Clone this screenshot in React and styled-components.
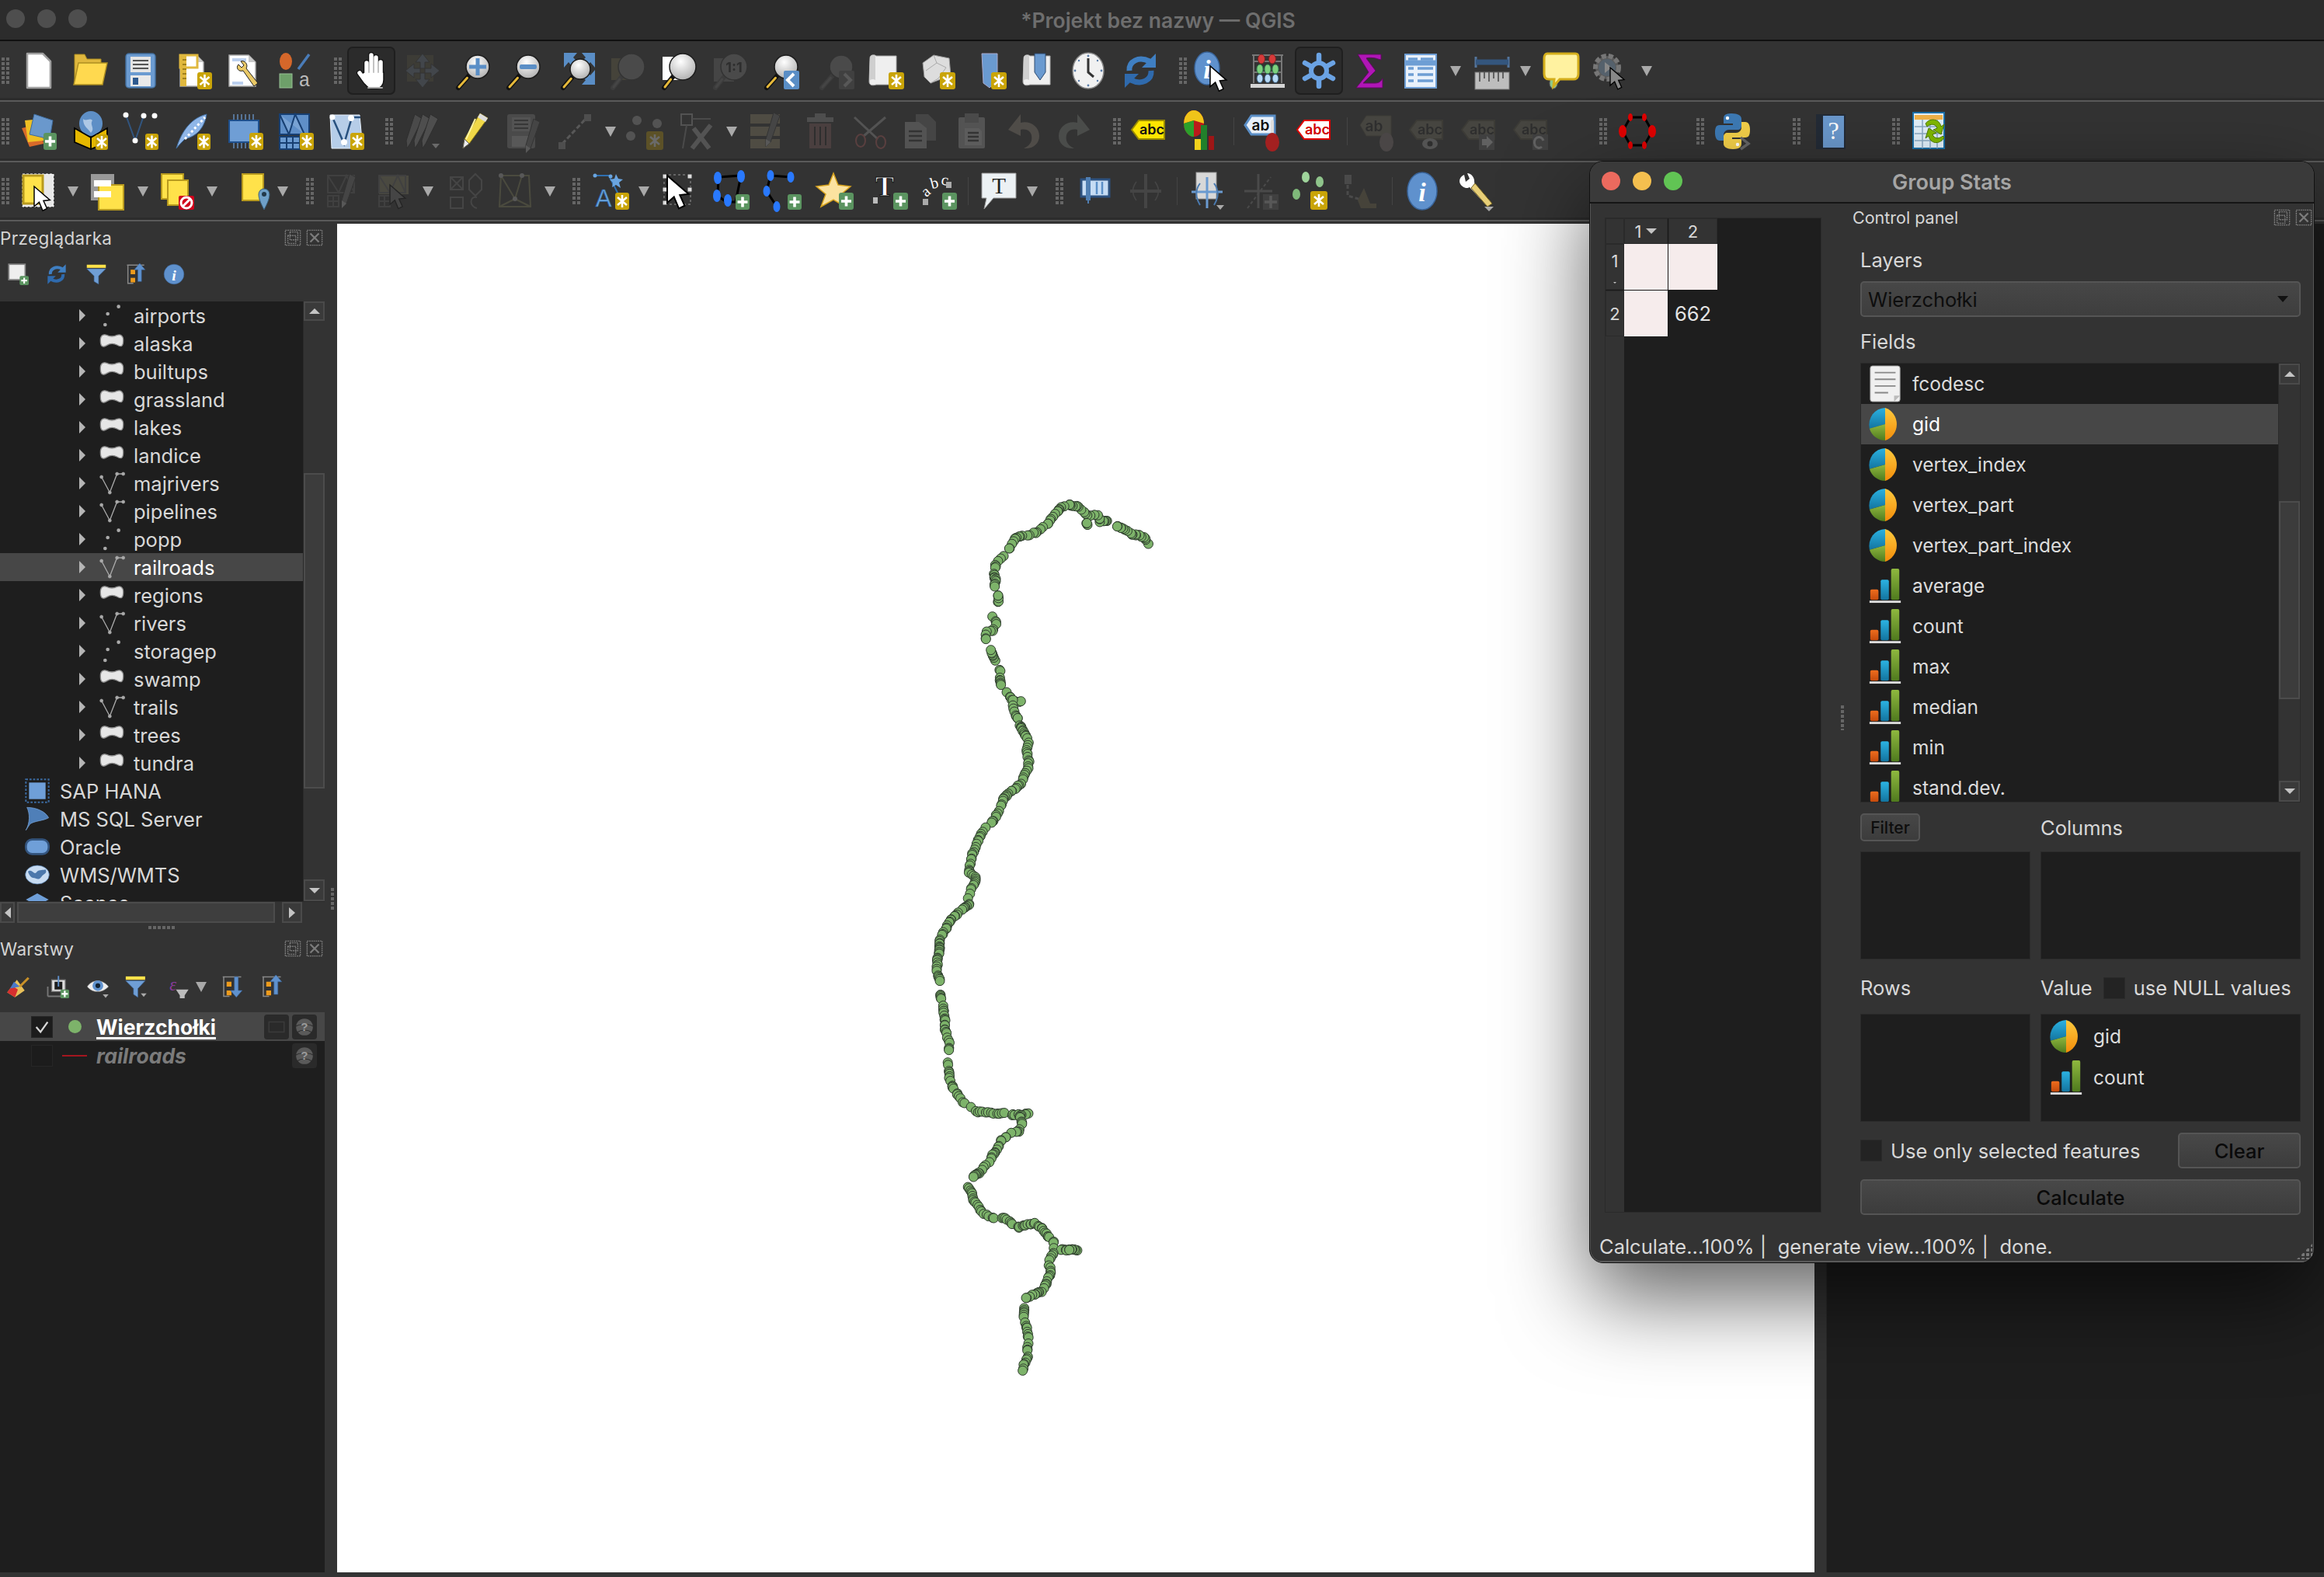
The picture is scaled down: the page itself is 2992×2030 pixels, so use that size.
import React from 'react';
import styled, { createGlobalStyle } from 'styled-components';

const Global = createGlobalStyle`
  html, body { margin: 0; padding: 0; background: #333; }
  body { font-family: Inter, "Noto Sans", "Liberation Sans", sans-serif; overflow: hidden; }
  * { box-sizing: border-box; }
`;

/* ---------- page frame ---------- */
const Root = styled.div`
  position: relative; width: 2992px; height: 2030px; background: #333;
  display: flex; flex-direction: column; overflow: hidden; color: #d8d8d8;
`;
const TitleBar = styled.div`
  height: 53px; flex: none; background: #2c2c2c; border-bottom: 2px solid #111;
  display: flex; align-items: center; justify-content: center; position: relative;
`;
const TitleLights = styled.div`
  position: absolute; left: 8px; top: 12px; display: flex; gap: 16px;
`;
const GreyLight = styled.span`
  width: 24px; height: 24px; border-radius: 50%; background: #4e4e4e;
`;
const TitleText = styled.span`
  font-size: 26.5px; font-weight: 600; color: #6e6e6e; margin-right: 10px;
`;
const ToolRow = styled.div`
  height: ${p => p.$h}px; flex: none; background: #333; display: flex; align-items: center;
  border-bottom: 2px solid #5a5a5a; box-shadow: inset 0 -3px 0 #2c2c2c;
`;
const Tool = styled.div`
  flex: none; width: ${p => (p.$active ? 62 : 48)}px; height: ${p => (p.$active ? 62 : 48)}px;
  display: flex; align-items: center; justify-content: center;
  opacity: ${p => (p.$off ? 0.27 : 1)};
  ${p => p.$active && 'background:#2b2b2b; border:2px solid #1f1f1f; border-radius:7px;'}
`;
const Grip = styled.i`
  flex: none; width: 10px; height: 34px; display: block;
  background-image: linear-gradient(#666 4px, transparent 4px);
  background-size: 100% 6px;
  mask-image: linear-gradient(to right, #000 4px, transparent 4px);
  mask-size: 6px 100%;
`;
const DropArrow = styled.i`
  flex: none; width: 0; height: 0; display: block; margin: 0 7px;
  border-left: 7px solid transparent; border-right: 7px solid transparent; border-top: 13px solid #a9a9a9;
`;
const Sep = styled.i`
  flex: none; width: 1px; height: 36px; background: #444; display: block;
`;
const Main = styled.div`
  flex: 1; display: flex; min-height: 0; padding-bottom: 6px;
`;
const LeftDock = styled.div`
  width: 434px; flex: none; display: flex; flex-direction: column; padding-right: 16px; position: relative;
`;
const Canvas = styled.div`
  width: 1902px; flex: none; background: #fff; margin-top: 3px; position: relative;
`;
const MapSvg = styled.svg`
  position: absolute; inset: 0; width: 100%; height: 100%;
`;
const RightDock = styled.div`
  flex: 1; margin: 3px 0 0 15px; background: #1e1e1e; border-left: 1px solid #2a2a2a;
`;

/* ---------- docks ---------- */
const DockHead = styled.div`
  height: 36px; flex: none; margin-top: 3px; display: flex; align-items: center; justify-content: space-between;
  font-size: 22.5px; letter-spacing: .35px; color: #d4d4d4; padding-right: 2px;
`;
const FloatBtns = styled.div`
  display: flex; gap: 6px;
`;
const DockBar = styled.div`
  height: ${p => p.$h}px; flex: none; display: flex; align-items: center; position: relative;
  padding-bottom: ${p => p.$pb}px;
`;
const DockBtn = styled.div`
  position: relative; flex: none; width: 28px; height: 30px; display: flex; align-items: center; justify-content: center;
  margin-left: ${p => p.$ml}px;
`;
const TreeBox = styled.div`
  height: 772px; flex: none; display: grid; grid-template-columns: 390px 28px; background: #1e1e1e;
`;
const TreeList = styled.div`
  overflow: hidden;
`;
const TreeRow = styled.div`
  height: 36px; display: flex; align-items: center; font-size: 25.5px;
  padding-left: ${p => (p.$top ? 32 : 102)}px;
  background: ${p => (p.$sel ? '#474747' : 'transparent')};
  color: ${p => (p.$sel ? '#fff' : '#d8d8d8')};
`;
const Expander = styled.i`
  width: 0; height: 0; margin-right: 18px; display: block; flex: none;
  border-top: 8px solid transparent; border-bottom: 8px solid transparent; border-left: 8px solid #b5b5b5;
`;
const RowIcon = styled.span`
  width: 32px; height: 32px; flex: none; margin-right: ${p => p.$mr}px; display: flex;
`;
const VScroll = styled.div`
  background: #333; display: flex; flex-direction: column; border-left: 1px solid #2a2a2a;
`;
const ScrollBtn = styled.div`
  height: ${p => p.$h}px; flex: none; background: #3a3a3a; border: 2px solid #4a4a4a;
  display: flex; align-items: center; justify-content: center;
`;
const TriUp = styled.i`
  width: 0; height: 0; display: block; border-left: 7px solid transparent; border-right: 7px solid transparent;
  border-bottom: 7px solid #c4c4c4;
`;
const TriDown = styled(TriUp)`
  border-bottom: 0; border-top: 7px solid #c4c4c4;
`;
const TinyDown = styled(TriUp)`
  border-left-width: 2px; border-right-width: 2px; border-bottom: 0; border-top: 2px solid #c4c4c4; margin-top: 8px;
`;
const TriLeft = styled.i`
  width: 0; height: 0; display: block; border-top: 7px solid transparent; border-bottom: 7px solid transparent;
  border-right: 8px solid #c4c4c4;
`;
const TriRight = styled(TriLeft)`
  border-right: 0; border-left: 8px solid #c4c4c4;
`;
const ScrollGap = styled.div`
  height: ${p => p.$h}px; flex: ${p => (p.$h ? 'none' : 1)};
`;
const ScrollThumb = styled.div`
  height: ${p => p.$h}px; flex: none; background: #3c3c3c; border: 2px solid #4c4c4c;
`;
const HScroll = styled.div`
  height: 28px; flex: none; display: flex; align-items: stretch; border-top: 1px solid #2a2a2a; width: 418px;
`;
const HBtn = styled.div`
  width: ${p => p.$w}px; margin-left: ${p => p.$ml}px; flex: none; background: #3a3a3a; border: 2px solid #4a4a4a;
  display: flex; align-items: center; justify-content: center;
`;
const HThumb = styled.div`
  width: 332px; margin-left: 3px; flex: none; background: #3e3e3e; border: 2px solid #4c4c4c;
`;
const HSplit = styled.div`
  height: 12px; flex: none; display: flex; align-items: center; justify-content: center;
`;
const HDots = styled.i`
  width: 36px; height: 4px; display: block;
  background-image: linear-gradient(to right, #666 4px, transparent 4px); background-size: 6px 100%;
`;
const VDots = styled.i`
  position: absolute; width: 4px; height: ${p => p.$h}px; left: ${p => p.$l}px; top: ${p => p.$t}px; display: block;
  background-image: linear-gradient(#666 4px, transparent 4px); background-size: 100% 6px;
`;
const LayerBox = styled.div`
  flex: 1; background: #1e1e1e;
`;
const LayerRow = styled.div`
  height: 37px; display: flex; align-items: center; padding-left: 40px; position: relative;
  background: ${p => (p.$sel ? '#474747' : 'transparent')};
`;
const LayerCheck = styled.span`
  width: 28px; height: 28px; background: #1c1c1c; border: 1px solid #262626; flex: none;
  display: flex; align-items: center; justify-content: center;
`;
const LayerSym = styled.span`
  width: 32px; flex: none; margin: 0 12px; display: flex; justify-content: center; align-items: center;
`;
const LayerDot = styled.i`
  width: 17px; height: 17px; border-radius: 50%; background: #7db36a; display: block;
`;
const LayerLine = styled.i`
  width: 32px; height: 2px; background: #a4161f; display: block;
`;
const LayerName = styled.span`
  font-size: 26.5px; font-weight: 700;
  ${p => (p.$italic
    ? 'font-style: italic; color: #7b7b7b;'
    : 'color: #fff; text-decoration: underline; text-decoration-thickness: 2.5px; text-underline-offset: 3px;')}
`;
const LayerTail = styled.span`
  position: absolute; right: 10px; top: 3px; display: flex; gap: 4px;
`;
const LayerBadge = styled.span`
  width: 32px; height: 32px; background: #2a2a2a; border-radius: 4px;
  display: flex; align-items: center; justify-content: center;
`;

/* ---------- floating dialog ---------- */
const Dialog = styled.div`
  position: absolute; left: 2046px; top: 207px; width: 934px; height: 1419px; background: #333;
  border-radius: 18px; border: 1px solid #111; box-shadow: inset 0 0 0 1px #555, 0 44px 110px rgba(0,0,0,.62);
  display: flex; flex-direction: column; overflow: hidden;
`;
const DialogBar = styled.div`
  height: 54px; flex: none; background: #3a3a3a; border-bottom: 2px solid #151515;
  display: flex; align-items: center; justify-content: center; position: relative;
`;
const DialogLights = styled.div`
  position: absolute; left: 15px; top: 13px; display: flex; gap: 16px;
`;
const Light = styled.span`
  width: 24px; height: 24px; border-radius: 50%; background: ${p => p.$c};
`;
const DialogTitle = styled.span`
  font-size: 27px; font-weight: 600; color: #a5a5a5;
`;
const DialogBody = styled.div`
  flex: 1; display: flex; padding: 3px 18px 0 19px; min-height: 0; position: relative;
`;
const TableWidget = styled.div`
  width: 279px; height: 1281px; margin-top: 15px; flex: none; background: #1e1e1e; border: 1px solid #2b2b2b;
  display: grid; grid-template-columns: 24px 56px 1px 63px; grid-template-rows: 33px 59px 1px 59px;
  align-content: start; position: relative;
`;
const TableSide = styled.i`
  position: absolute; left: 0; top: 33px; bottom: 0; width: 24px; background: #333; display: block;
`;
const TH = styled.div`
  background: #333; border: 1px solid #2a2a2a; display: flex; align-items: center; justify-content: center;
  flex-direction: ${p => (p.$col ? 'column' : 'row')};
  font-size: 22px; color: #d8d8d8; gap: 6px; position: relative; z-index: 1;
`;
const TD = styled.div`
  background: ${p => (p.$pink ? '#f6ecec' : '#1e1e1e')}; color: #e4e4e4; font-size: 25.5px;
  display: flex; align-items: center; justify-content: center; position: relative; z-index: 1;
`;
const TLine = styled.i`
  background: #1a1a1a; display: block; position: relative; z-index: 1;
`;
const Control = styled.div`
  width: 567px; margin-left: 50px; flex: none; display: flex; flex-direction: column;
`;
const ControlHead = styled.div`
  height: 30px; margin-left: -10px; margin-right: -15px; flex: none; display: flex; align-items: center;
  justify-content: space-between; font-size: 21.5px; color: #d6d6d6;
`;
const Label = styled.div`
  height: 30px; flex: none; margin-top: ${p => p.$mt}px; font-size: 25.5px; color: #d8d8d8;
  display: flex; align-items: center; white-space: nowrap;
`;
const Combo = styled.div`
  height: 46px; flex: none; margin-top: 13px; border: 2px solid #555; border-radius: 5px;
  background: linear-gradient(#474747, #3e3e3e); color: #0d0d0d; font-size: 25.5px;
  display: flex; align-items: center; justify-content: space-between; padding: 0 14px 0 8px;
`;
const ComboCaret = styled.i`
  width: 0; height: 0; display: block; border-left: 7px solid transparent; border-right: 7px solid transparent;
  border-top: 8px solid #111;
`;
const FieldList = styled.div`
  height: 566px; flex: none; margin-top: 13px; background: #1e1e1e; border: 1px solid #2a2a2a;
  display: grid; grid-template-columns: 1fr 28px; overflow: hidden;
`;
const FieldCol = styled.div`
  overflow: hidden; min-width: 0;
`;
const FieldRow = styled.div`
  height: 52px; display: flex; align-items: center; gap: 12px; padding-left: 8px; font-size: 24.5px;
  background: ${p => (p.$sel ? '#474747' : 'transparent')};
  color: ${p => (p.$sel ? '#fff' : '#dcdcdc')};
`;
const FilterLine = styled.div`
  display: grid; grid-template-columns: 219px 335px; column-gap: 13px; margin-top: ${p => p.$mt}px; flex: none;
  align-items: ${p => (p.$center ? 'center' : 'stretch')};
`;
const SmallBtn = styled.div`
  width: 77px; height: 36px; border: 2px solid #555; border-radius: 5px; background: linear-gradient(#474747, #3c3c3c);
  color: #0d0d0d; font-size: 21px; font-weight: 500; display: flex; align-items: center; justify-content: center;
`;
const WellBox = styled.div`
  height: 139px; background: #1e1e1e; border: 1px solid #2a2a2a; padding-top: 1px;
`;
const WellRow = styled.div`
  height: 53px; display: flex; align-items: center; gap: 12px; padding-left: 9px; font-size: 24.5px; color: #dcdcdc;
`;
const ValueHead = styled.div`
  display: flex; align-items: center; font-size: 25.5px; color: #d8d8d8; white-space: nowrap;
`;
const Check = styled.span`
  width: 28px; height: 28px; background: #232323; border: 1px solid #2a2a2a; display: block; flex: none;
  margin: 0 ${p => p.$mr}px 0 ${p => p.$ml}px;
`;
const OnlyRow = styled.div`
  display: flex; align-items: center; justify-content: space-between; height: 46px; flex: none; margin-top: 14px;
`;
const OnlyLabel = styled.span`
  display: flex; align-items: center; font-size: 25.5px; color: #d8d8d8; white-space: nowrap;
`;
const PushBtn = styled.div`
  height: 46px; flex: none; width: ${p => p.$w || '100%'}; margin-top: ${p => p.$mt || 0}px;
  border: 2px solid #555; border-radius: 5px; background: linear-gradient(#484848, #3c3c3c); color: #0a0a0a;
  font-size: 25.5px; font-weight: 500; display: flex; align-items: center; justify-content: center;
`;
const StatusLine = styled.div`
  height: 63px; flex: none; display: flex; align-items: center; padding: 23px 0 0 12px; font-size: 25.5px;
  color: #d8d8d8; white-space: pre; position: relative; border-bottom: 2px solid #5a5a5a;
`;
const Resizer = styled.i`
  position: absolute; right: 2px; bottom: 2px; width: 20px; height: 20px; display: block;
  background: radial-gradient(circle at 2px 2px, #777 2px, transparent 2.5px) 0 0 / 6px 6px;
  clip-path: polygon(100% 0, 100% 100%, 0 100%);
`;
const DefsSvg = styled.svg`
  position: absolute; width: 0; height: 0;
`;

/* ---------- icon pieces ---------- */
const Ast = ({ x = 30, y = 24, w = 17, h = 24 }) => {
  const cx = x + w / 2, cy = y + h / 2;
  return (
    <g>
      <rect x={x} y={y} width={w} height={h} rx="3" fill="#c9a408" />
      <path d={`M${cx} ${cy - 8}V${cy + 8}M${cx - 6} ${cy - 5}L${cx + 6} ${cy + 5}M${cx + 6} ${cy - 5}L${cx - 6} ${cy + 5}`} stroke="#fff" strokeWidth="2.6" />
    </g>
  );
};
const Add = ({ x = 31, y = 28, w = 17, h = 20 }) => {
  const cx = x + w / 2, cy = y + h / 2;
  return (
    <g>
      <rect x={x} y={y} width={w} height={h} rx="3" fill="#5b9460" />
      <path d={`M${cx} ${cy - 6.5}V${cy + 6.5}M${cx - 6.5} ${cy}H${cx + 6.5}`} stroke="#fff" strokeWidth="3.6" />
    </g>
  );
};
const Arrow = ({ x, y, s = 1, fill = '#fff' }) => (
  <path transform={`translate(${x} ${y}) scale(${s})`} d="M0 0V28L7 22L12 34L18 31L13 20L22 19Z" fill={fill} stroke="#000" strokeWidth="1.6" />
);
const Lens = ({ fill = 'url(#lens)', hc = '#e6b93a', cx = 29, cy = 19, r = 15, dark }) => (
  <g>
    <path d={`M${cx - r * 0.7} ${cy + r * 0.7}L4 46`} stroke={dark ? '#555' : '#111'} strokeWidth="6" strokeLinecap="round" />
    <path d={`M${cx - r * 0.9} ${cy + r * 0.95}L5 45`} stroke={dark ? '#777' : hc} strokeWidth="3" strokeLinecap="round" />
    <circle cx={cx} cy={cy} r={r} fill={fill} stroke={dark ? '#333' : '#1c1c1c'} strokeWidth="1.5" />
  </g>
);
const Scroll = () => (
  <g>
    <path d="M6 8C6 3 12 3 14 5H40V42H14C8 44 5 42 5 38Z" fill="#efefef" stroke="#aaa" />
    <path d="M6 8C6 3 12 3 13 6V36C10 34 6 35 5 38Z" fill="#cfcfcf" />
  </g>
);
const Tag = ({ label, bg, fg = '#111', border, w = 46 }) => (
  <g>
    <path d={`M2 22L11 10H${w - 2}V34H11Z`} fill={bg} stroke={border} strokeWidth="2" />
    <text x={w / 2 + 5} y="28" fontSize={label.length > 2 ? 18 : 19} fontWeight="600" fontFamily="Inter" fill={fg} textAnchor="middle">{label}</text>
  </g>
);
const Nodes = ({ pts, r = 3.5, fill = '#fff', stroke = '#1c3f6e', w = 2 }) => (
  <g>
    <polyline points={pts.map(p => p.join(',')).join(' ')} fill="none" stroke={stroke} strokeWidth={w} />
    {pts.map(([a, b], i) => <circle key={i} cx={a} cy={b} r={r} fill={fill} />)}
  </g>
);
const Hex = () => (
  <g>
    <path d="M15 6H33L43 24L33 42H15L5 24Z" fill="none" stroke="#000" strokeWidth="3" />
    {[[15, 6], [33, 6], [15, 42], [33, 42]].map(([a, b]) => <ellipse key={a + '' + b} cx={a} cy={b} rx="3" ry="5" fill="#e00000" />)}
    <ellipse cx="5" cy="24" rx="5" ry="8" fill="#e00000" /><ellipse cx="43" cy="24" rx="5" ry="8" fill="#e00000" />
  </g>
);
const Reload = ({ c1 = '#3f7fc2', c2 = '#2f6aad' }) => (
  <g fill="none" strokeWidth="7">
    <path d="M10 24C9 12 22 5 36 12" stroke={c1} /><path d="M38 24C39 36 26 43 12 36" stroke={c2} />
    <path d="M44 2V20H26Z" fill={c1} /><path d="M4 46V28H22Z" fill={c2} />
  </g>
);
const InfoDisc = ({ cx = 24, cy = 24, rx = 18, ry = 23 }) => (
  <g>
    <ellipse cx={cx} cy={cy} rx={rx} ry={ry} fill="#5f91cd" stroke="#3a659b" strokeWidth="1.5" />
    <text x={cx} y={cy + 13} fontSize="34" fontStyle="italic" fontWeight="700" fontFamily="Liberation Serif" fill="#fff" textAnchor="middle">i</text>
  </g>
);
const Page = ({ x = 10, w = 28, fill = '#fff' }) => (
  <g>
    <path d={`M${x} 4H${x + w - 9}L${x + w} 13V44H${x}Z`} fill={fill} stroke="#aaa" strokeWidth="1.5" />
    <path d={`M${x + w - 9} 4V13H${x + w}`} fill="#c8c8c8" />
  </g>
);
const Yellow = ({ x, y, w = 26, h = 36, s = '#b89a1e' }) => <rect x={x} y={y} width={w} height={h} fill="#ffe24a" stroke={s} strokeWidth="2" />;
const MeshGrid = () => (
  <g fill="none" stroke="#666" strokeWidth="2">
    <rect x="4" y="4" width="34" height="22" /><path d="M4 4L18 26L28 4L38 26" /><rect x="4" y="30" width="14" height="14" /><path d="M11 30V44M4 37H18" />
  </g>
);
const DisPencil = ({ x = 22, y = 2 }) => (
  <g transform={`translate(${x} ${y})`}>
    <path d="M12 0L20 4L8 38L2 44L2 34Z" fill="#777" stroke="#333" /><path d="M2 34L8 38L2 44Z" fill="#bbb" />
  </g>
);
const DisTag = ({ label }) => <Tag label={label} bg="#7b7765" border="#55513f" fg="#222" />;

const ICONS = {
  new: <path d="M9 2H29L39 12V46H9Z" fill="#fff" stroke="#a0a0a0" strokeWidth="2.5" strokeLinejoin="round" />,
  open: (
    <g>
      <path d="M4 3H17L20 9H38V40H4Z" fill="#e0b83e" stroke="#a98a20" />
      <path d="M9 14H46L40 42H3Z" fill="#ffd94f" stroke="#ad8e22" strokeWidth="1.5" />
    </g>
  ),
  save: (
    <g>
      <rect x="5" y="2" width="38" height="44" rx="4" fill="#6b9bd1" stroke="#44709f" strokeWidth="1.5" />
      <rect x="11" y="6" width="26" height="20" fill="#e4e4e4" />
      <path d="M14 11H34M14 16H34M14 21H34" stroke="#555" strokeWidth="2" />
      <rect x="11" y="30" width="26" height="14" fill="#e9e9e9" />
      <rect x="14" y="33" width="7" height="9" fill="#2f5a8f" />
    </g>
  ),
  newLayout: (
    <g>
      <Page x={8} w={30} />
      <rect x="8" y="4" width="8" height="40" fill="#e0b83e" /><rect x="8" y="4" width="22" height="16" fill="none" stroke="#e0b83e" strokeWidth="3" />
      <path d="M11 10H16M11 16H16M11 22H16M11 28H16M11 34H16" stroke="#8c6e10" strokeWidth="1.5" />
      <Ast x={30} y={26} w={19} h={22} />
    </g>
  ),
  layoutMgr: (
    <g>
      <Page x={6} w={34} />
      <path d="M10 8H28V12H10ZM10 38H24V42H10Z" fill="#bcd0ee" />
      <path d="M18 16C14 20 18 26 24 24L38 44L43 40L28 21C31 16 26 10 21 12L25 17L22 20Z" fill="#e9c866" stroke="#222" />
    </g>
  ),
  styleMgr: (
    <g>
      <ellipse cx="12" cy="12" rx="8" ry="11" fill="#d5672a" />
      <path d="M28 22L42 3" stroke="#4a7cb8" strokeWidth="3.5" />
      <rect x="4" y="28" width="16" height="18" fill="#6ea06a" stroke="#98c096" />
      <text x="36" y="44" fontSize="25" fill="#bbb" textAnchor="middle" fontFamily="Liberation Mono">a</text>
    </g>
  ),
  hand: (
    <g strokeLinecap="round" fill="none">
      <g stroke="#111" strokeWidth="8">
        <path d="M9 27L17 38M18 34V14M24 32V4M30 32V7M36 34V13" />
      </g>
      <path d="M15 26H40V36C40 42 36 47 31 47H24C19 47 12 38 9 29Z" fill="#fff" stroke="#111" strokeWidth="1.5" />
      <g stroke="#fff" strokeWidth="5.5">
        <path d="M9 27L17 38M18 34V14M24 32V4M30 32V7M36 34V13" />
      </g>
      <path d="M20 46H38" stroke="#aaa" strokeWidth="2" />
    </g>
  ),
  pan: (
    <g fill="#6a7a8c" stroke="#333">
      <rect x="4" y="4" width="34" height="34" fill="#6a6344" opacity=".7" stroke="none" />
      <path d="M24 2L33 13H27V21H21V13H15Z" /><path d="M24 46L33 35H27V27H21V35H15Z" /><path d="M2 24L13 15V21H21V27H13V33Z" /><path d="M46 24L35 15V21H27V27H35V33Z" />
    </g>
  ),
  zoomIn: <g><Lens /><path d="M29 8V30M18 19H40" stroke="#5a8ec6" strokeWidth="5" /></g>,
  zoomOut: <g><Lens /><rect x="18" y="16" width="22" height="6" rx="2" fill="#5a8ec6" /></g>,
  zoomFull: (
    <g>
      <path d="M5 1H22L17 7L22 12L15 18L11 13L5 20Z" fill="#5a8ec6" />
      <path d="M45 1H28L33 7L28 12L35 18L39 13L45 20Z" fill="#5a8ec6" />
      <path d="M45 42H28L33 36L28 31L35 25L39 30L45 23Z" fill="#5a8ec6" />
      <Lens r={13} cx={26} cy={22} />
    </g>
  ),
  zoomLayer: <g><rect x="2" y="8" width="24" height="28" fill="#756f4f" /><Lens fill="#8a8a8a" r={17} cx={28} cy={19} dark /></g>,
  zoomSel: <g><rect x="2" y="6" width="28" height="30" fill="#fff" /><Lens r={17} cx={28} cy={19} /></g>,
  zoom11: <g><rect x="2" y="8" width="26" height="30" fill="#777" /><Lens fill="#888" r={17} cx={28} cy={19} dark /><text x="28" y="26" fontSize="18" fontWeight="700" fill="#222" textAnchor="middle" fontFamily="Inter">1:1</text></g>,
  zoomLast: <g><Lens /><rect x="26" y="24" width="20" height="24" rx="2" fill="#5a8ec6" /><path d="M39 28L31 36L39 44" fill="none" stroke="#fff" strokeWidth="4" /></g>,
  zoomNext: <g><Lens fill="#888" dark /><rect x="26" y="24" width="20" height="24" rx="2" fill="#666" /><path d="M33 28L41 36L33 44" fill="none" stroke="#bbb" strokeWidth="4" /></g>,
  newMap: <g><Scroll /><Ast x={30} y={26} w={20} h={22} /></g>,
  new3d: (
    <g>
      <path d="M4 14L18 4L38 8L40 30L14 40L6 32Z" fill="#ddd" stroke="#999" />
      <path d="M8 24L22 14L34 20L24 34M18 4L22 14M14 40L24 34" stroke="#aaa" fill="none" />
      <Ast x={26} y={26} w={20} h={22} />
    </g>
  ),
  newBm: <g><path d="M10 2H30V36L20 46L12 40Z" fill="#6a9ad0" stroke="#aac" /><Ast x={22} y={26} w={20} h={22} /></g>,
  showBm: <g><Scroll /><path d="M20 2H34V26L27 36L20 26Z" fill="#6a9ad0" stroke="#2c4a70" /></g>,
  clock: (
    <g>
      <ellipse cx="24" cy="24" rx="20" ry="23" fill="#f1f1f1" stroke="#888" strokeWidth="1.5" />
      <path d="M24 8V26L31 32" stroke="#333" strokeWidth="3" fill="none" />
      <g fill="#5b7da8"><circle cx="24" cy="5" r="1.4" /><circle cx="24" cy="43" r="1.4" /><circle cx="7" cy="24" r="1.4" /><circle cx="41" cy="24" r="1.4" /><circle cx="12" cy="11" r="1.2" /><circle cx="36" cy="11" r="1.2" /><circle cx="12" cy="37" r="1.2" /><circle cx="36" cy="37" r="1.2" /></g>
    </g>
  ),
  refresh: <Reload />,
  identify: <g><InfoDisc cx={18} cy={21} rx={16} ry={21} /><Arrow x={22} y={18} s={.95} /></g>,
  abacus: (
    <g>
      <path d="M6 4V40M42 4V40M4 4H44M5 12H43M6 26H43" stroke="#777" strokeWidth="2" />
      <rect x="2" y="41" width="44" height="5" fill="#d5d5d5" />
      {[16, 30].map(x => <ellipse key={x} cx={x} cy="9" rx="4.5" ry="6" fill="#d63a3a" stroke="#722" />)}
      {[14, 24, 34].map(x => <ellipse key={x} cx={x} cy="22" rx="4" ry="6" fill="#7ed07e" stroke="#385" />)}
      {[14, 24, 34].map(x => <ellipse key={x} cx={x} cy="34" rx="4" ry="5.5" fill="#b5d9f5" stroke="#357" />)}
    </g>
  ),
  attrs: (
    <g>
      <g stroke="#6ba3e4" strokeWidth="6.5" strokeLinecap="round">
        <path d="M24 4V44M6 14L42 34M6 34L42 14" />
      </g>
      <circle cx="24" cy="24" r="13" fill="#6ba3e4" />
      <circle cx="24" cy="24" r="7" fill="#2b2b2b" />
    </g>
  ),
  sigma: <path d="M8 3H38V10L34 9C30 7 20 7 19 8L31 24L15 40H30C36 40 38 37 40 34V46H6L22 26Z" fill="#b016b6" stroke="#5e0a5f" />,
  table: (
    <g>
      <rect x="4" y="3" width="40" height="43" fill="#e9f1fb" stroke="#6e9ed4" strokeWidth="2" />
      <path d="M4 14H44" stroke="#6e9ed4" strokeWidth="7" /><path d="M8 9H20M24 9H40" stroke="#6e9ed4" strokeWidth="3.5" />
      <path d="M8 21H15M20 21H40M8 29H15M20 29H40M8 37H15M20 37H40" stroke="#6e9ed4" strokeWidth="3.5" />
    </g>
  ),
  ruler: (
    <g>
      <path d="M4 6V20M46 6V20M4 13H46" stroke="#54759c" strokeWidth="3" /><path d="M4 13H46" stroke="#34567e" strokeWidth="7" />
      <rect x="3" y="26" width="44" height="22" fill="#bdbdbd" stroke="#777" />
      <path d="M9 26V38M15 26V34M21 26V38M27 26V34M33 26V38M39 26V34" stroke="#444" strokeWidth="1.5" />
    </g>
  ),
  bubble: (
    <g>
      <ellipse cx="14" cy="40" rx="5" ry="7" fill="#8ec98a" stroke="#666" />
      <path d="M6 2H42C46 2 46 5 46 8V28C46 34 42 35 40 35H22L14 44L15 35H8C4 35 2 33 2 28V8C2 4 4 2 6 2Z" fill="#fff2a0" stroke="#d4ae1b" strokeWidth="3" />
    </g>
  ),
  gearCursor: (
    <g>
      <circle cx="20" cy="20" r="15" fill="#5a5a5a" stroke="#777" strokeWidth="6" strokeDasharray="6 3" />
      <circle cx="20" cy="20" r="11" fill="#55616c" />
      <path d="M17 13L26 20L17 27Z" fill="#888" />
      <Arrow x={24} y={20} s={.82} fill="#888" />
    </g>
  ),
  dsm: (
    <g>
      <path d="M2 20L26 14L30 40L12 44Z" fill="#d86a2a" /><path d="M6 10L28 8L30 36L10 38Z" fill="#efc023" />
      <path d="M18 2L42 10L38 34L12 28Z" fill="#6a98cc" stroke="#3d6a9c" />
      <Add x={30} y={26} w={17} h={22} />
    </g>
  ),
  newGpkg: (
    <g>
      <ellipse cx="24" cy="14" rx="15" ry="16" fill="#5e8fc6" />
      <path d="M14 8C18 12 22 6 26 10C22 16 30 20 24 26C20 20 14 18 14 8Z" fill="#cfe0f2" opacity=".7" />
      <path d="M3 20L24 32L45 20V38L24 47L3 38Z" fill="#e5b800" stroke="#000" strokeWidth="1.8" /><path d="M24 32V47" stroke="#000" strokeWidth="1.8" />
      <Ast x={30} y={28} w={16} h={20} />
    </g>
  ),
  newVec: <g><Nodes pts={[[5, 3], [17, 36], [28, 4]]} stroke="#31557f" /><circle cx="42" cy="4" r="3.5" fill="#fff" /><Ast x={30} y={27} w={17} h={21} /></g>,
  quill: (
    <g>
      <path d="M3 46C8 30 18 8 42 2C40 16 32 30 14 34C10 38 6 42 3 46Z" fill="#8fb6e8" stroke="#3d6a9c" />
      <path d="M14 34L40 6" stroke="#fff" strokeDasharray="3 3" strokeWidth="3" />
      <Ast x={30} y={27} w={17} h={21} />
    </g>
  ),
  chip: (
    <g>
      <path d="M10 2V46M15 2V46M20 2V46M25 2V46M30 2V46M35 2V46" stroke="#6fa0d8" strokeWidth="1.2" />
      <rect x="4" y="10" width="38" height="28" fill="#6f9ed5" stroke="#1e4f8c" strokeWidth="2" />
      <Ast x={30} y={26} w={18} h={22} />
    </g>
  ),
  mesh: (
    <g>
      <rect x="4" y="2" width="38" height="26" fill="#5f8fc8" stroke="#173f72" strokeWidth="2" />
      <path d="M4 2L16 28L24 2L36 28" stroke="#173f72" strokeWidth="2" fill="#9dbde4" fillOpacity=".4" />
      <rect x="4" y="31" width="26" height="16" fill="#6a9ad0" stroke="#173f72" strokeWidth="2" />
      <path d="M13 31V47M21 31V47M4 39H30" stroke="#173f72" strokeWidth="2" />
      <Ast x={30} y={26} w={18} h={22} />
    </g>
  ),
  vertex: (
    <g>
      <path d="M4 3H42L46 46H6Z" fill="#b6cde8" stroke="#e8f0fa" />
      <path d="M7 6L22 40L32 6L43 6" stroke="#28517f" strokeWidth="2.5" fill="none" />
      <circle cx="22" cy="38" r="4" fill="#fff" /><circle cx="31" cy="7" r="4" fill="#fff" /><circle cx="7" cy="6" r="3.5" fill="#fff" />
      <Ast x={30} y={26} w={18} h={22} />
    </g>
  ),
  editPencils: (
    <g>
      <path d="M14 2L24 8L8 40L4 46L3 36Z" fill="#888" stroke="#222" /><path d="M24 2L34 8L18 40L14 46L13 36Z" fill="#999" stroke="#222" /><path d="M34 2L44 8L28 40L24 46L23 36Z" fill="#999" stroke="#222" />
      <path d="M36 40H46L41 46Z" fill="#fff" />
    </g>
  ),
  pencil: (
    <g>
      <path d="M32 1L42 7L18 40L10 46L12 34Z" fill="#f0d848" stroke="#8c7a18" />
      <path d="M32 1L42 7L39 12L29 6Z" fill="#ddd" />
      <path d="M12 34L18 40L10 46Z" fill="#eee" stroke="#555" />
      <path d="M26 8L14 34" stroke="#fff3a0" strokeWidth="2" />
    </g>
  ),
  saveEdit: (
    <g>
      <rect x="4" y="2" width="36" height="44" rx="3" fill="#888" />
      <rect x="10" y="6" width="24" height="18" fill="#aaa" /><path d="M13 10H31M13 15H31M13 20H31" stroke="#444" strokeWidth="2" />
      <rect x="10" y="30" width="22" height="14" fill="#bbb" />
      <DisPencil x={26} y={8} />
    </g>
  ),
  lineDig: <g><path d="M8 40L38 8" stroke="#bbb" strokeWidth="3" strokeDasharray="6 3" /><rect x="3" y="38" width="9" height="9" fill="#999" /><rect x="36" y="2" width="9" height="9" fill="#999" /></g>,
  pointDig: <g><circle cx="14" cy="10" r="6" fill="#aaa" /><circle cx="40" cy="14" r="6" fill="#aaa" /><circle cx="6" cy="30" r="6" fill="#aaa" /><Ast x={26} y={24} w={22} h={24} /></g>,
  vtool: <g><rect x="4" y="2" width="14" height="14" fill="none" stroke="#aaa" strokeWidth="2" /><path d="M11 16L6 46M18 8H42" stroke="#888" strokeWidth="2" /><path d="M18 46L42 16M20 20L40 46" stroke="#aaa" strokeWidth="6" /></g>,
  tableEdit: <g><rect x="2" y="2" width="38" height="12" fill="#9a9170" /><rect x="2" y="18" width="38" height="12" fill="#9a9170" /><rect x="2" y="34" width="38" height="12" fill="#9a9170" /><DisPencil x={20} y={0} /></g>,
  trash: <g><rect x="6" y="6" width="34" height="6" fill="#999" /><rect x="16" y="1" width="14" height="5" fill="#999" /><path d="M9 14H37V46H9Z" fill="#8a5f5f" /><path d="M16 18V42M23 18V42M30 18V42" stroke="#222" strokeWidth="2" /></g>,
  scissors: <g><path d="M4 6L34 34M44 6L16 30" stroke="#aaa" strokeWidth="3" /><ellipse cx="38" cy="38" rx="6" ry="8" fill="none" stroke="#c06060" strokeWidth="2" /><ellipse cx="12" cy="36" rx="6" ry="8" fill="none" stroke="#c06060" strokeWidth="2" /></g>,
  copy: <g><path d="M18 2H34L44 12V36H18Z" fill="#777" /><path d="M4 12H22L32 20V46H4Z" fill="#aaa" /><path d="M9 24H26M9 30H26M9 36H26" stroke="#333" strokeWidth="2.5" /></g>,
  paste: <g><rect x="6" y="6" width="34" height="40" rx="2" fill="#aaa" /><rect x="14" y="1" width="18" height="12" fill="#888" /><path d="M14 20H32L36 24V42H14Z" fill="#ccc" /><path d="M18 26H32M18 31H32M18 36H32" stroke="#333" strokeWidth="2.5" /></g>,
  undo: <path d="M20 2L4 22L20 30V22C30 20 36 26 34 36C32 42 28 44 24 46C36 47 44 40 44 30C44 18 32 10 20 13Z" fill="#9a8f80" />,
  redo: <path d="M28 2L44 22L28 30V22C18 20 12 26 14 36C16 42 20 44 24 46C12 47 4 40 4 30C4 18 16 10 28 13Z" fill="#8a8f88" />,
  tagYellow: <Tag label="abc" bg="#ffe600" border="#9a8a00" />,
  labelChart: (
    <g>
      <ellipse cx="13" cy="14" rx="13" ry="17" fill="#bb1a1a" /><path d="M13 -3A13 17 0 0 0 0 14L13 10L26 14A13 17 0 0 0 13 -3Z" fill="#f0c419" /><path d="M0 14A13 17 0 0 0 13 31V10Z" fill="#2ba02b" />
      <rect x="14" y="34" width="8" height="14" fill="#f2d21c" /><rect x="22" y="16" width="8" height="32" fill="#21802b" /><rect x="32" y="30" width="7" height="18" fill="#9e1616" />
    </g>
  ),
  tagPin: (
    <g>
      <path d="M2 16L10 4H40V28H10Z" fill="#e8f0fa" stroke="#5a8ec6" strokeWidth="3" />
      <text x="22" y="23" fontSize="19" fontWeight="600" fontFamily="Inter" fill="#111" textAnchor="middle">ab</text>
      <path d="M35 12C35 8 39 8 39 12V28H35Z" fill="#ddd" />
      <ellipse cx="37" cy="38" rx="9" ry="12" fill="#a32020" />
    </g>
  ),
  tagRed: <Tag label="abc" bg="#fff" fg="#d00000" border="#e00000" />,
  offTagPin: (
    <g>
      <path d="M2 16L10 4H42V30H10Z" fill="#7b7765" stroke="#55513f" />
      <text x="20" y="24" fontSize="19" fontWeight="600" fontFamily="Inter" fill="#222" textAnchor="middle">ab</text>
      <ellipse cx="36" cy="38" rx="9" ry="12" fill="#8a7a7a" />
    </g>
  ),
  offTagEye: <g><DisTag label="abc" /><ellipse cx="28" cy="40" rx="10" ry="7" fill="#aaa" /><circle cx="28" cy="40" r="3.5" fill="#222" /></g>,
  offTagMove: <g><DisTag label="abc" /><rect x="24" y="28" width="20" height="20" fill="#666" /><path d="M28 34H34V30L42 38L34 46V42H28Z" fill="#ddd" /></g>,
  offTagRot: <g><DisTag label="abc" /><rect x="26" y="28" width="20" height="20" fill="#666" /><path d="M40 36A6 7 0 1 0 38 44" fill="none" stroke="#ddd" strokeWidth="3" /></g>,
  hexagon: <Hex />,
  python: (
    <g>
      <path d="M22 1C12 1 12 5 12 9V14H24V16H7C2 16 1 20 1 26C1 32 3 36 7 36H12V29C12 25 15 22 19 22H30C33 22 35 20 35 17V8C35 4 31 1 22 1Z" fill="#3d7ab5" />
      <path d="M24 47C34 47 35 43 35 39V34H23V32H40C45 32 46 28 46 22C46 16 44 12 40 12H35V19C35 23 32 26 28 26H17C14 26 12 28 12 31V40C12 44 16 47 24 47Z" fill="#f4d049" />
      <circle cx="17" cy="7" r="2.2" fill="#fff" /><circle cx="30" cy="41" r="2.2" fill="#fff" />
      <path d="M34 32L44 40L34 47" stroke="#666" strokeWidth="3.5" fill="none" />
    </g>
  ),
  help: (
    <g>
      <rect x="6" y="2" width="38" height="45" fill="#232b36" /><rect x="15" y="4" width="27" height="41" fill="#6a98cc" />
      <text x="28.5" y="34" fontSize="32" fill="#fff" textAnchor="middle" fontFamily="Liberation Serif">?</text>
    </g>
  ),
  tableSync: (
    <g>
      <rect x="4" y="0" width="40" height="46" fill="#e2f0fb" stroke="#1a6fa8" strokeWidth="2" />
      <rect x="6" y="3" width="36" height="6" fill="#f0b24a" />
      <path d="M6 18H42M6 27H42M6 36H42M16 9V46M26 9V46M35 9V46" stroke="#8aa9c4" strokeWidth="1.5" />
      <path d="M20 14C26 6 38 8 40 18L44 15L40 28L30 22L35 20C33 14 26 14 22 18Z" fill="#7fb800" stroke="#4d7a00" />
      <path d="M44 32C38 42 26 40 24 30L20 33L24 20L34 26L29 28C31 34 38 34 42 30Z" fill="#7fb800" stroke="#4d7a00" />
    </g>
  ),
  selFeat: (
    <g>
      <rect x="3" y="2" width="40" height="42" fill="#e8e8e8" stroke="#fff" strokeDasharray="3 2" />
      <rect x="4" y="4" width="25" height="36" fill="#ffe24a" stroke="#b89a1e" strokeWidth="3" />
      <Arrow x={18} y={18} s={.92} />
    </g>
  ),
  selTable: (
    <g>
      <rect x="4" y="2" width="30" height="34" fill="#999" />
      <Yellow x={14} y={16} w={32} h={32} />
      <rect x="8" y="10" width="22" height="8" fill="#fff" /><rect x="8" y="24" width="22" height="8" fill="#fff" />
    </g>
  ),
  deselect: (
    <g>
      <Yellow x={4} y={2} w={28} h={32} />
      <Yellow x={12} y={10} w={26} h={32} />
      <rect x="26" y="30" width="20" height="18" rx="2" fill="#d0021b" /><circle cx="36" cy="39" r="7" fill="none" stroke="#fff" strokeWidth="3" /><path d="M31 44L41 34" stroke="#fff" strokeWidth="3" />
    </g>
  ),
  selPoint: (
    <g>
      <Yellow x={8} y={2} w={27} h={34} />
      <path d="M36 48C32 40 29 34 29 28A7 7 0 0 1 43 28C43 34 40 40 36 48Z" fill="#6fa0c8" stroke="#375f7c" />
      <circle cx="36" cy="28" r="3" fill="#22394a" />
    </g>
  ),
  editMesh: <g><MeshGrid /><DisPencil x={20} y={2} /></g>,
  selMesh: <g><rect x="4" y="4" width="38" height="24" fill="#8a8464" /><MeshGrid /><Arrow x={18} y={16} s={.9} fill="#777" /></g>,
  ghostMesh: <g fill="none" stroke="#777" strokeWidth="2"><rect x="4" y="6" width="16" height="16" /><path d="M4 6L20 22M20 6L4 22" /><path d="M28 10L36 2L44 10L44 22L36 30L28 22Z" /><rect x="4" y="32" width="16" height="14" /><path d="M38 32C28 30 28 44 38 46" /></g>,
  meshVert: <g><path d="M6 4H42L44 44H4Z" fill="none" stroke="#8a8a5c" strokeWidth="2" /><path d="M6 4L24 34L33 4M24 34L4 44M24 34L44 44" stroke="#8a8a5c" strokeWidth="2" fill="none" /><circle cx="6" cy="4" r="3" fill="#bbb" /><circle cx="24" cy="34" r="3" fill="#bbb" /><circle cx="33" cy="4" r="3" fill="#bbb" /></g>,
  labelTool: (
    <g>
      <path d="M3 4H22M22 6L34 30" stroke="#2f6fb0" strokeWidth="2" fill="none" /><circle cx="3" cy="4" r="2.5" fill="#6aa5e0" /><circle cx="23" cy="5" r="2.5" fill="#6aa5e0" /><circle cx="33" cy="29" r="2.5" fill="#6aa5e0" />
      <path d="M30 2L33 8L39 9L34 13L36 20L30 16L25 19L26 13L22 9L28 8Z" fill="#6aa5e0" />
      <text x="14" y="44" fontSize="31" fill="#6aa5e0" stroke="#2b5f96" strokeWidth=".7" textAnchor="middle" fontFamily="Liberation Sans">A</text>
      <Ast x={29} y={26} w={18} h={22} />
    </g>
  ),
  annSelect: (
    <g>
      <rect x="5" y="3" width="34" height="38" fill="none" stroke="#777" strokeWidth="1.5" strokeDasharray="3 3" />
      {[[3, 2], [35, 2], [3, 19], [35, 19], [3, 36]].map(([a, b]) => <rect key={a + '' + b} x={a} y={b} width="6" height="6" fill="#ddd" stroke="#333" />)}
      <Arrow x={9} y={4} s={1.25} />
    </g>
  ),
  addPoly: (
    <g>
      <path d="M8 6L37 4L30 38L18 38L7 30Z" fill="none" stroke="#000" strokeWidth="3" />
      {[[7, 7], [37, 5], [6, 30], [20, 36]].map(([a, b]) => <ellipse key={a + '' + b} cx={a} cy={b} rx="5" ry="8" fill="#2979ff" />)}
      <Add x={30} y={28} w={18} h={20} />
    </g>
  ),
  addLine: (
    <g>
      <path d="M8 4L34 6M8 4L3 24L16 44" fill="none" stroke="#000" strokeWidth="3" />
      {[[8, 4], [34, 6], [3, 24], [16, 44]].map(([a, b]) => <ellipse key={a + '' + b} cx={a} cy={b} rx="4.5" ry="7" fill="#2979ff" />)}
      <Add x={30} y={28} w={18} h={20} />
    </g>
  ),
  addStar: (
    <g>
      <path d="M22 1L28 16L44 18L32 28L37 44L22 35L6 44L12 28L0 18L16 16Z" fill="#fce3a0" stroke="#d6a21e" strokeWidth="1.5" />
      <Add x={29} y={26} w={19} h={22} />
    </g>
  ),
  addText: (
    <g>
      <text x="18" y="30" fontSize="36" fill="#fff" stroke="#111" strokeWidth="1" textAnchor="middle" fontFamily="Liberation Serif" fontWeight="700">T</text>
      <rect x="3" y="32" width="6" height="8" fill="#bbb" /><Add x={29} y={26} w={19} h={22} />
    </g>
  ),
  addCurved: (
    <g>
      <text x="4" y="28" fontSize="20" fill="#fff" transform="rotate(-40 12 24)" fontFamily="Liberation Serif">a</text>
      <text x="14" y="20" fontSize="20" fill="#fff" transform="rotate(-15 20 14)" fontFamily="Liberation Serif">b</text>
      <text x="28" y="16" fontSize="20" fill="#fff" transform="rotate(14 32 10)" fontFamily="Liberation Serif">c</text>
      <rect x="4" y="34" width="7" height="8" fill="#aaa" /><rect x="34" y="12" width="7" height="8" fill="#aaa" />
      <Add x={29} y={26} w={19} h={22} />
    </g>
  ),
  textBubble: (
    <g>
      <path d="M3 1H47V33H18L6 47L9 33H3Z" fill="#ecf1f4" stroke="#999" />
      <text x="25" y="27" fontSize="29" fill="#222" textAnchor="middle" fontFamily="Liberation Serif">T</text>
    </g>
  ),
  move: (
    <g>
      <rect x="6" y="9" width="36" height="22" fill="#c6dcf4" stroke="#2d517f" strokeWidth="3" />
      <rect x="12" y="6" width="6" height="30" fill="#4f7eb2" /><path d="M15 30V40" stroke="#4f7eb2" strokeWidth="2" />
      <path d="M26 12V28M33 12V28" stroke="#5a8ec6" strokeWidth="2.5" />
    </g>
  ),
  crossHair: (
    <g stroke="#777" fill="none">
      <path d="M4 24H44M24 2V46" strokeWidth="4" /><path d="M12 12C6 20 6 28 12 36M36 12C42 20 42 28 36 36" strokeWidth="1.5" />
    </g>
  ),
  crossMove: (
    <g>
      <rect x="10" y="0" width="26" height="34" fill="#d8d8d8" stroke="#999" />
      <path d="M4 25H44M24 6V46" stroke="#6a9ad0" strokeWidth="3" />
      <path d="M15 14C9 22 9 32 15 42M33 14C39 22 39 32 33 42" stroke="#4a7ab0" strokeWidth="2" fill="none" />
      <path d="M36 42H46L41 48Z" fill="#aaa" />
    </g>
  ),
  crossAdd: (
    <g>
      <path d="M4 24H40M22 2V46" stroke="#888" strokeWidth="3" /><path d="M8 46L38 6" stroke="#888" strokeWidth="2" strokeDasharray="4 3" />
      <rect x="28" y="28" width="20" height="20" fill="#666" /><path d="M38 30V46M30 38H46" stroke="#bbb" strokeWidth="3.5" />
    </g>
  ),
  ptsStar: (
    <g>
      <ellipse cx="18" cy="6" rx="5" ry="7" fill="#9fd49b" /><ellipse cx="36" cy="12" rx="5" ry="7" fill="#8fc48b" /><ellipse cx="6" cy="28" rx="5" ry="7" fill="#7fb97a" />
      <Ast x={24} y={24} w={22} h={24} />
    </g>
  ),
  traceGhost: (
    <g>
      <rect x="3" y="3" width="9" height="12" fill="#888" />
      <path d="M7 16V30L28 36" stroke="#888" strokeWidth="3" strokeDasharray="5 3" fill="none" />
      <path d="M28 20L36 40H44V46H24L20 36Z" fill="#7a7050" />
    </g>
  ),
  infoBig: <InfoDisc cx={24} cy={24} rx={19} ry={24} />,
  wrench: (
    <g>
      <path d="M10 3C3 6 2 14 8 18C12 21 15 20 17 19L40 44L46 40L23 13C24 8 20 1 14 1L17 8L12 12Z" fill="#fff" />
      <path d="M19 20L40 44L46 40L24 14Z" fill="#e8cf78" stroke="#6c5a18" />
      <path d="M36 44H48L42 50Z" fill="#aaa" />
    </g>
  ),
  /* small dock icons */
  addLayerBox: <g><rect x="4" y="2" width="36" height="34" fill="#eee" stroke="#888" strokeWidth="3" /><Add x={28} y={28} w={20} h={20} /></g>,
  filter: <g><rect x="3" y="3" width="42" height="7" fill="#ffe24a" /><path d="M3 12H45L29 28V46L19 40V28Z" fill="#6f9ed5" stroke="#3a659b" /></g>,
  collapse: (
    <g>
      <path d="M6 4H44M8 4V44H20" stroke="#888" strokeWidth="2.5" fill="none" />
      <rect x="14" y="14" width="10" height="10" fill="#ee9b1c" /><rect x="14" y="32" width="10" height="10" fill="#ee9b1c" />
      <path d="M34 0L46 14H38V40H30V14H22Z" fill="#5f91cd" stroke="#3a659b" />
    </g>
  ),
  expand: (
    <g>
      <path d="M6 4H44M8 4V44H20" stroke="#888" strokeWidth="2.5" fill="none" />
      <rect x="14" y="14" width="10" height="10" fill="#ee9b1c" /><rect x="14" y="32" width="10" height="10" fill="#ee9b1c" />
      <path d="M34 46L46 32H38V4H30V32H22Z" fill="#5f91cd" stroke="#3a659b" />
    </g>
  ),
  info: <g><circle cx="24" cy="24" r="22" fill="#5f91cd" stroke="#3a659b" /><text x="24" y="37" fontSize="34" fontStyle="italic" fontWeight="700" fontFamily="Liberation Serif" fill="#fff" textAnchor="middle">i</text></g>,
  brush: (
    <g>
      <path d="M2 36L22 10L38 32L18 46Z" fill="#e8c05a" /><path d="M2 36L12 22L24 30L18 46Z" fill="#d72f2f" /><path d="M8 28L16 14L28 24Z" fill="#4b78c8" />
      <path d="M28 24L46 6" stroke="#c89028" strokeWidth="5" />
    </g>
  ),
  addGroup: (
    <g>
      <path d="M4 44H32M4 44V24" stroke="#777" strokeWidth="3" fill="none" />
      <rect x="12" y="10" width="28" height="24" fill="#ddd" stroke="#777" strokeWidth="2" /><rect x="18" y="14" width="16" height="16" fill="#1e1e1e" />
      <path d="M26 24V2" stroke="#5f91cd" strokeWidth="3" /><Add x={30} y={30} w={18} h={18} />
    </g>
  ),
  eye: (
    <g>
      <path d="M2 24C12 8 34 8 46 24C34 38 12 38 2 24Z" fill="#eee" stroke="#666" />
      <circle cx="24" cy="22" r="11" fill="#5f91cd" /><circle cx="24" cy="22" r="5" fill="#123" />
      <path d="M34 40H46L40 47Z" fill="#aaa" />
    </g>
  ),
  filterDrop: <g><rect x="3" y="3" width="40" height="7" fill="#ffe24a" /><path d="M3 12H43L28 28V46L19 40V28Z" fill="#6f9ed5" stroke="#3a659b" /><path d="M34 38H46L40 45Z" fill="#aaa" /></g>,
  epsilon: (
    <g>
      <text x="14" y="32" fontSize="36" fontFamily="Liberation Serif" fill="#8a3b9c" fontStyle="italic" textAnchor="middle">ε</text>
      <path d="M20 30H46L38 42V48H28V42Z" fill="#bbb" />
    </g>
  ),
  pie: (
    <g>
      <path d="M24 2A22 23 0 0 1 24 46Z" fill="url(#pieO)" />
      <path d="M24 2A22 23 0 0 0 3 30L24 24Z" fill="url(#pieB)" />
      <path d="M3 30A22 23 0 0 0 24 46V24Z" fill="url(#pieG)" />
    </g>
  ),
  bars: (
    <g>
      <rect x="4" y="29" width="11" height="14" rx="2" fill="url(#barO)" />
      <rect x="18" y="16" width="11" height="27" rx="2" fill="url(#pieB)" />
      <rect x="32" y="1" width="11" height="42" rx="2" fill="url(#pieG)" />
      <rect x="3" y="44" width="42" height="3" fill="#ddd" />
    </g>
  ),
  doc: (
    <g>
      <rect x="4" y="0" width="40" height="48" rx="3" fill="#f0f0f0" stroke="#999" />
      <path d="M10 9H38M10 18H38M10 27H38M10 36H28" stroke="#888" strokeWidth="2" />
      <path d="M36 48L44 40H36Z" fill="#bbb" />
    </g>
  ),
  pts: <g fill="#aaa"><circle cx="11" cy="42" r="3.5" /><circle cx="16" cy="21" r="3.5" /><circle cx="37" cy="7" r="3.5" /></g>,
  poly: (
    <path d="M2 18C2 8 8 6 14 8C20 11 28 11 34 8C41 6 46 9 46 18C46 30 42 32 34 27C28 24 20 24 14 28C6 33 2 30 2 18Z" fill="#e6e6e6" stroke="#8f8f8f" strokeWidth="2" />
  ),
  lineI: (
    <g fill="#aaa" stroke="#aaa">
      <path d="M4 12L20 42L34 6H46" fill="none" strokeWidth="2" />
      <circle cx="4" cy="12" r="3" /><circle cx="20" cy="42" r="3" /><circle cx="34" cy="6" r="3" /><circle cx="46" cy="6" r="3" />
    </g>
  ),
  hana: <g><rect x="8" y="8" width="32" height="32" fill="#6f9fd8" /><rect x="2" y="2" width="44" height="44" fill="none" stroke="#3b6aa0" strokeWidth="3" strokeDasharray="4 3" /></g>,
  mssql: <path d="M4 2C22 2 40 10 46 22C36 28 18 28 10 34L2 46C10 32 10 14 4 2Z" fill="#4f7fb8" stroke="#7aa8dc" />,
  oracle: <rect x="2" y="10" width="44" height="28" rx="12" fill="#6f9fd8" stroke="#34557f" strokeWidth="4" />,
  wms: <g><ellipse cx="24" cy="24" rx="23" ry="18" fill="#c8dcf2" stroke="#4c78ac" /><path d="M6 18C14 12 16 24 22 20C26 14 32 16 40 14C44 22 36 22 32 28C26 36 22 30 16 30C12 30 8 24 6 18Z" fill="#4c78ac" /></g>,
  scenes: <g><path d="M24 6L46 18L24 30L2 18Z" fill="#6f9fd8" /><path d="M2 24L24 36L46 24V32L24 44L2 32Z" fill="#3f6a9c" /></g>,
  floatA: <g fill="none" stroke="#7c7c7c" strokeWidth="3" strokeDasharray="4 2"><rect x="3" y="3" width="42" height="42" /><rect x="16" y="8" width="22" height="22" /><rect x="10" y="18" width="22" height="22" /></g>,
  floatX: <g fill="none" stroke="#7c7c7c" strokeWidth="3"><rect x="3" y="3" width="42" height="42" strokeDasharray="4 2" /><path d="M12 12L36 36M36 12L12 36" strokeWidth="5" /></g>,
  globeQ: (
    <g>
      <circle cx="24" cy="24" r="20" fill="#5a5a5a" /><path d="M4 22C14 16 34 16 44 22M8 36C16 30 32 30 40 36" stroke="#2a2a2a" strokeWidth="2" fill="none" />
      <text x="24" y="33" fontSize="28" fontWeight="700" fill="#9a9a9a" textAnchor="middle" fontFamily="Liberation Sans">?</text>
    </g>
  ),
  memLayer: <g fill="none" stroke="#3a3a3a" strokeWidth="3"><rect x="6" y="12" width="36" height="24" /></g>,
  check: <path d="M8 24L20 38L40 10" fill="none" stroke="#d8d8d8" strokeWidth="5" />,
};

const Icon = ({ name, size = 48 }) => (
  <svg width={size} height={size} viewBox="0 0 48 48" style={{ overflow: 'visible', flex: 'none', display: 'block' }}>
    {ICONS[name]}
  </svg>
);

/* ---------- toolbars ---------- */
const W = { grip: 10, arrow: 14, sep: 1 };
const row1 = [[7, 'grip'], [50, 'new'], [116, 'open'], [181, 'save'], [248, 'newLayout'], [313, 'layoutMgr'], [380, 'styleMgr'], [435, 'grip'], [478, 'hand', 'a'], [544, 'pan', 'o'], [610, 'zoomIn'], [675, 'zoomOut'], [745, 'zoomFull'], [809, 'zoomLayer', 'o'], [875, 'zoomSel'], [941, 'zoom11', 'o'], [1007, 'zoomLast'], [1078, 'zoomNext', 'o'], [1138, 'newMap'], [1208, 'new3d'], [1278, 'newBm'], [1336, 'showBm'], [1401, 'clock'], [1468, 'refresh'], [1523, 'grip'], [1560, 'identify'], [1632, 'abacus'], [1698, 'attrs', 'a'], [1764, 'sigma'], [1829, 'table'], [1874, 'arrow'], [1920, 'ruler'], [1964, 'arrow'], [2010, 'bubble'], [2073, 'gearCursor'], [2120, 'arrow']];
const row2 = [[7, 'grip'], [50, 'dsm'], [117, 'newGpkg'], [181, 'newVec'], [248, 'quill'], [315, 'chip'], [380, 'mesh'], [445, 'vertex'], [501, 'grip'], [544, 'editPencils', 'o'], [610, 'pencil'], [673, 'saveEdit', 'o'], [740, 'lineDig', 'o'], [786, 'arrow'], [830, 'pointDig', 'o'], [897, 'vtool', 'o'], [942, 'arrow'], [988, 'tableEdit', 'o'], [1057, 'trash', 'o'], [1120, 'scissors', 'o'], [1185, 'copy', 'o'], [1252, 'paste', 'o'], [1318, 'undo', 'o'], [1383, 'redo', 'o'], [1438, 'grip'], [1479, 'tagYellow'], [1548, 'labelChart'], [1588, 'sep'], [1625, 'tagPin'], [1692, 'tagRed'], [1734, 'sep'], [1773, 'offTagPin', 'o'], [1837, 'offTagEye', 'o'], [1904, 'offTagMove', 'o'], [1971, 'offTagRot', 'o'], [2064, 'grip'], [2108, 'hexagon'], [2189, 'grip'], [2231, 'python'], [2313, 'grip'], [2356, 'help'], [2441, 'grip'], [2483, 'tableSync']];
const row3 = [[7, 'grip'], [50, 'selFeat'], [94, 'arrow'], [137, 'selTable'], [184, 'arrow'], [228, 'deselect'], [273, 'arrow'], [328, 'selPoint'], [364, 'arrow'], [399, 'grip'], [442, 'editMesh', 'o'], [508, 'selMesh', 'o'], [551, 'arrow'], [600, 'ghostMesh', 'o'], [663, 'meshVert', 'o'], [708, 'arrow'], [742, 'grip'], [787, 'labelTool'], [829, 'arrow'], [874, 'annSelect'], [941, 'addPoly'], [1008, 'addLine'], [1075, 'addStar'], [1145, 'addText'], [1208, 'addCurved'], [1246, 'sep'], [1285, 'textBubble'], [1329, 'arrow'], [1364, 'grip'], [1410, 'move'], [1475, 'crossHair', 'o'], [1515, 'sep'], [1554, 'crossMove'], [1622, 'crossAdd', 'o'], [1687, 'ptsStar'], [1752, 'traceGhost', 'o'], [1792, 'sep'], [1831, 'infoBig'], [1899, 'wrench']];

const Toolbar = ({ items, h }) => {
  let end = 0;
  return (
    <ToolRow $h={h}>
      {items.map(([c, name, flag], i) => {
        const active = flag === 'a';
        const w = W[name] || (active ? 62 : 48);
        const style = { marginLeft: c - w / 2 - end };
        end = c + w / 2;
        if (name === 'grip') return <Grip key={i} style={style} />;
        if (name === 'sep') return <Sep key={i} style={style} />;
        if (name === 'arrow') return <DropArrow key={i} style={{ marginLeft: style.marginLeft, marginRight: 0 }} />;
        return <Tool key={i} style={style} $active={active} $off={flag === 'o'}><Icon name={name} /></Tool>;
      })}
    </ToolRow>
  );
};

/* ---------- map points ---------- */
const SEGMENTS = [
  { o: [1190, 630], p: [[867, 212], [850, 185], [830, 178], [800, 172], [775, 155], [745, 143]] },
  { o: [1190, 630], p: [[705, 122], [680, 125], [672, 100], [628, 100], [590, 65], [560, 60], [530, 68], [515, 85], [497, 105], [480, 130], [460, 147], [435, 165], [400, 178], [370, 182], [350, 190], [340, 210], [328, 228]] },
  { o: [1190, 630], p: [[628, 138], [628, 130]] },
  { o: [1190, 630], p: [[305, 258], [285, 275], [272, 300], [268, 325], [275, 350], [272, 375]] },
  { o: [1190, 630], p: [[285, 435], [285, 410]] },
  { o: [1190, 630], p: [[263, 490], [278, 513], [263, 545], [240, 550], [238, 578]] },
  { o: [1190, 630], p: [[275, 662], [265, 645], [257, 620]] },
  { o: [1190, 630], p: [[293, 697], [290, 725], [296, 755]] },
  { o: [1190, 630], p: [[345, 818], [373, 818]] },
  { o: [1190, 630], p: [[320, 785], [340, 815], [345, 845], [360, 885], [375, 920], [390, 950], [405, 980], [393, 1005], [397, 1022], [405, 1045], [400, 1075], [385, 1105], [375, 1135], [350, 1155], [320, 1180], [305, 1195]] },
  { o: [1190, 1030], p: [[305, 5], [290, 40], [260, 87]] },
  { o: [1190, 1030], p: [[235, 105], [212, 145], [198, 180], [185, 210], [178, 245], [172, 280], [198, 297], [195, 315], [183, 340], [170, 378], [172, 403], [150, 420], [125, 440], [95, 470], [83, 497], [70, 520], [58, 545], [58, 570], [55, 595], [50, 620], [50, 660], [60, 698]] },
  { o: [1190, 1030], p: [[62, 750], [65, 767]] },
  { o: [1190, 1030], p: [[72, 795], [75, 815], [80, 850], [80, 885], [90, 915], [98, 937], [95, 965]] },
  { o: [1190, 1030], p: [[92, 1015], [95, 1050], [100, 1085], [110, 1110], [128, 1135], [150, 1165], [180, 1185]] },
  { o: [1190, 1430], p: [[200, 3], [240, 5], [280, 10], [310, 10], [340, 15], [400, 12], [368, 20], [378, 50], [365, 78], [335, 85], [315, 100], [295, 115], [285, 140], [265, 170], [250, 200], [235, 212], [210, 240], [190, 255]] },
  { o: [1190, 1430], p: [[170, 295], [183, 320], [190, 345], [207, 362], [220, 390], [240, 403], [270, 415], [310, 415], [340, 435], [365, 450], [400, 440], [428, 435], [455, 455], [480, 485], [498, 505], [500, 530]] },
  { o: [1190, 1430], p: [[590, 537], [530, 535], [560, 537]] },
  { o: [1190, 1430], p: [[497, 550], [485, 575], [480, 595], [490, 620], [480, 640], [470, 670], [455, 697], [425, 707], [393, 722]] },
  { o: [1190, 1430], p: [[385, 760], [385, 790], [390, 815], [397, 840], [402, 870], [400, 900], [398, 925]] },
  { o: [1190, 1430], p: [[400, 950], [385, 980], [380, 1003]] },
];

const buildPoints = () => {
  let seed = 20231;
  const rnd = () => { seed = (seed * 16807) % 2147483647; return seed / 2147483647; };
  const out = [];
  SEGMENTS.forEach(({ o, p }) => {
    for (let i = 0; i < p.length - 1; i++) {
      const [a, b] = p[i], [c, d] = p[i + 1];
      const len = Math.hypot(c - a, d - b) / 3;
      let t = 0;
      while (t <= len) {
        const k = len ? t / len : 0;
        out.push([o[0] + (a + (c - a) * k) / 3 + (rnd() - .5) * 1.6, o[1] + (b + (d - b) * k) / 3 + (rnd() - .5) * 1.6]);
        t += 1.2 + rnd() * rnd() * 10;
      }
    }
    const last = p[p.length - 1];
    out.push([o[0] + last[0] / 3, o[1] + last[1] / 3]);
  });
  return out;
};
const POINTS = buildPoints();

/* ---------- data ---------- */
const TREE = [
  ['airports', 'pts'], ['alaska', 'poly'], ['builtups', 'poly'], ['grassland', 'poly'], ['lakes', 'poly'], ['landice', 'poly'],
  ['majrivers', 'lineI'], ['pipelines', 'lineI'], ['popp', 'pts'], ['railroads', 'lineI', true], ['regions', 'poly'], ['rivers', 'lineI'],
  ['storagep', 'pts'], ['swamp', 'poly'], ['trails', 'lineI'], ['trees', 'poly'], ['tundra', 'poly'],
];
const SOURCES = [['SAP HANA', 'hana'], ['MS SQL Server', 'mssql'], ['Oracle', 'oracle'], ['WMS/WMTS', 'wms'], ['Scenes', 'scenes']];
const FIELDS = [['fcodesc', 'doc'], ['gid', 'pie', true], ['vertex_index', 'pie'], ['vertex_part', 'pie'], ['vertex_part_index', 'pie'], ['average', 'bars'], ['count', 'bars'], ['max', 'bars'], ['median', 'bars'], ['min', 'bars'], ['stand.dev.', 'bars']];

const FloatIcons = ({ size = 22 }) => (
  <FloatBtns><Icon name="floatA" size={size} /><Icon name="floatX" size={size} /></FloatBtns>
);

export default function App() {
  return (
    <Root>
      <Global />
      <DefsSvg>
        <defs>
          <radialGradient id="lens" cx=".42" cy=".3" r=".85">
            <stop offset="0" stopColor="#fff" /><stop offset="1" stopColor="#a2a2a2" />
          </radialGradient>
          <linearGradient id="pieO" x1="0" y1="0" x2="0" y2="1">
            <stop offset="0" stopColor="#fcc93e" /><stop offset="1" stopColor="#f38d0a" />
          </linearGradient>
          <linearGradient id="pieB" x1="0" y1="0" x2="0" y2="1">
            <stop offset="0" stopColor="#2bb2e2" /><stop offset="1" stopColor="#13749f" />
          </linearGradient>
          <linearGradient id="pieG" x1="0" y1="0" x2="0" y2="1">
            <stop offset="0" stopColor="#8fb83f" /><stop offset="1" stopColor="#4f7a1e" />
          </linearGradient>
          <linearGradient id="barO" x1="0" y1="0" x2="0" y2="1">
            <stop offset="0" stopColor="#ee6d1e" /><stop offset="1" stopColor="#c44a0c" />
          </linearGradient>
        </defs>
      </DefsSvg>

      <TitleBar>
        <TitleLights><GreyLight /><GreyLight /><GreyLight /></TitleLights>
        <TitleText>*Projekt bez nazwy — QGIS</TitleText>
      </TitleBar>
      <Toolbar items={row1} h={78} />
      <Toolbar items={row2} h={78} />
      <Toolbar items={row3} h={76} />

      <Main>
        <LeftDock>
          <DockHead>Przeglądarka<FloatIcons /></DockHead>
          <DockBar $h={64} $pb={6}>
            {[['addLayerBox', 9], ['refresh', 22], ['filter', 23], ['collapse', 22], ['info', 22]].map(([n, ml]) => (
              <DockBtn key={n} $ml={ml}><Icon name={n} size={28} /></DockBtn>
            ))}
          </DockBar>
          <TreeBox>
            <TreeList>
              {TREE.map(([t, ic, sel]) => (
                <TreeRow key={t} $sel={sel}><Expander /><RowIcon $mr={12}><Icon name={ic} size={32} /></RowIcon>{t}</TreeRow>
              ))}
              {SOURCES.map(([t, ic]) => (
                <TreeRow key={t} $top><RowIcon $mr={13}><Icon name={ic} size={32} /></RowIcon>{t}</TreeRow>
              ))}
            </TreeList>
            <VScroll>
              <ScrollBtn $h={25}><TriUp /></ScrollBtn>
              <ScrollGap $h={196} />
              <ScrollThumb $h={406} />
              <ScrollGap />
              <ScrollBtn $h={28}><TriDown /></ScrollBtn>
            </VScroll>
          </TreeBox>
          <HScroll>
            <HBtn $w={19} $ml={0}><TriLeft /></HBtn>
            <HThumb />
            <HBtn $w={26} $ml={9}><TriRight /></HBtn>
          </HScroll>
          <VDots $h={30} $l={426} $t={858} />
          <HSplit><HDots /></HSplit>
          <DockHead>Warstwy<FloatIcons /></DockHead>
          <DockBar $h={64} $pb={2}>
            {[['brush', 9], ['addGroup', 23], ['eye', 24], ['filterDrop', 21], ['epsilon', 26]].map(([n, ml]) => (
              <DockBtn key={n} $ml={ml}><Icon name={n} size={30} /></DockBtn>
            ))}
            <DropArrow style={{ marginLeft: 9 }} />
            <DockBtn $ml={11}><Icon name="expand" size={30} /></DockBtn>
            <DockBtn $ml={23}><Icon name="collapse" size={30} /></DockBtn>
          </DockBar>
          <LayerBox>
            <LayerRow $sel>
              <LayerCheck><Icon name="check" size={22} /></LayerCheck>
              <LayerSym><LayerDot /></LayerSym>
              <LayerName>Wierzchołki</LayerName>
              <LayerTail>
                <LayerBadge><Icon name="memLayer" size={26} /></LayerBadge>
                <LayerBadge><Icon name="globeQ" size={26} /></LayerBadge>
              </LayerTail>
            </LayerRow>
            <LayerRow>
              <LayerCheck />
              <LayerSym><LayerLine /></LayerSym>
              <LayerName $italic>railroads</LayerName>
              <LayerTail><LayerBadge><Icon name="globeQ" size={26} /></LayerBadge></LayerTail>
            </LayerRow>
          </LayerBox>
        </LeftDock>

        <Canvas>
          <MapSvg viewBox="434 288 1902 1736">
            {POINTS.map(([x, y], i) => (
              <circle key={i} cx={x} cy={y} r="6" fill="#7db36a" stroke="#2d3a2d" strokeWidth="1" />
            ))}
          </MapSvg>
        </Canvas>
        <RightDock />
      </Main>

      <Dialog>
        <DialogBar>
          <DialogLights><Light $c="#ec6a5e" /><Light $c="#f4bf4f" /><Light $c="#61c454" /></DialogLights>
          <DialogTitle>Group Stats</DialogTitle>
        </DialogBar>
        <DialogBody>
          <TableWidget>
            <TableSide />
            <TH />
            <TH>1<TriDown /></TH><TLine />
            <TH>2</TH>
            <TH $col>1<TinyDown /></TH>
            <TD $pink /><TLine /><TD $pink />
            <TLine /><TLine /><TLine /><TLine />
            <TH>2</TH>
            <TD $pink /><TLine /><TD>662</TD>
          </TableWidget>
          <VDots $h={32} $l={323} $t={646} />
          <Control>
            <ControlHead>Control panel<FloatIcons size={22} /></ControlHead>
            <Label $mt={24}>Layers</Label>
            <Combo>Wierzchołki<ComboCaret /></Combo>
            <Label $mt={16}>Fields</Label>
            <FieldList>
              <FieldCol>
                {FIELDS.map(([t, ic, sel]) => (
                  <FieldRow key={t} $sel={sel}><Icon name={ic} size={46} />{t}</FieldRow>
                ))}
              </FieldCol>
              <VScroll>
                <ScrollBtn $h={27}><TriUp /></ScrollBtn>
                <ScrollGap $h={150} />
                <ScrollThumb $h={255} />
                <ScrollGap />
                <ScrollBtn $h={27}><TriDown /></ScrollBtn>
              </VScroll>
            </FieldList>
            <FilterLine $mt={14} $center>
              <SmallBtn>Filter</SmallBtn>
              <ValueHead>Columns</ValueHead>
            </FilterLine>
            <FilterLine $mt={13}><WellBox /><WellBox /></FilterLine>
            <FilterLine $mt={21} $center>
              <ValueHead>Rows</ValueHead>
              <ValueHead>Value<Check $ml={14} $mr={11} />use NULL values</ValueHead>
            </FilterLine>
            <FilterLine $mt={18}>
              <WellBox />
              <WellBox>
                <WellRow><Icon name="pie" size={46} />gid</WellRow>
                <WellRow><Icon name="bars" size={46} />count</WellRow>
              </WellBox>
            </FilterLine>
            <OnlyRow>
              <OnlyLabel><Check $ml={0} $mr={11} />Use only selected features</OnlyLabel>
              <PushBtn $w="158px">Clear</PushBtn>
            </OnlyRow>
            <PushBtn $mt={14}>Calculate</PushBtn>
          </Control>
        </DialogBody>
        <StatusLine>Calculate...100% |  generate view...100% |  done.<Resizer /></StatusLine>
      </Dialog>
    </Root>
  );
}
